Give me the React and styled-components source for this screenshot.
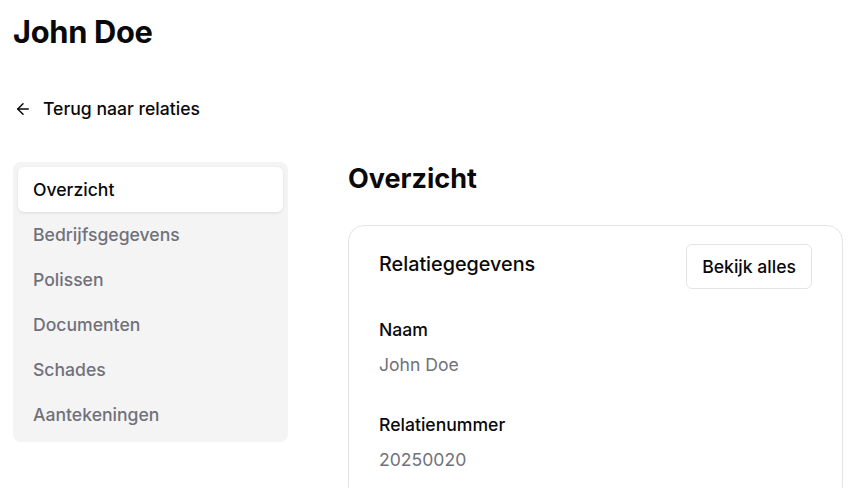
import styled, { createGlobalStyle } from "styled-components";
import { ArrowLeft } from "lucide-react";

const GlobalStyle = createGlobalStyle`
  body {
    margin: 0;
    background: #ffffff;
    font-family: Inter, "Noto Sans", sans-serif;
    color: #09090b;
  }
`;

const Page = styled.div`
  padding: 12px 14px 0 13px;
  display: flex;
  flex-direction: column;
`;

const Title = styled.h1`
  margin: 0;
  font-size: 30.8px;
  font-weight: 700;
  line-height: 40px;
  letter-spacing: -0.3px;
`;

const BackLink = styled.a`
  display: flex;
  align-items: center;
  gap: 11px;
  margin-top: 46px;
  padding-left: 1px;
  font-size: 17.6px;
  font-weight: 500;
  color: #09090b;
  line-height: 22px;
  cursor: pointer;
`;

const Layout = styled.div`
  display: grid;
  grid-template-columns: 275px 1fr;
  gap: 60px;
  margin-top: 42px;
  align-items: start;
`;

const SideNav = styled.nav`
  background: #f4f4f5;
  border-radius: 8px;
  padding: 5px;
  display: flex;
  flex-direction: column;
`;

const NavItem = styled.div`
  height: 45px;
  display: flex;
  align-items: center;
  padding-left: 15px;
  font-size: 17.6px;
  font-weight: 500;
  border-radius: 6px;
  color: ${(p) => (p.$active ? "#09090b" : "#71717a")};
  background: ${(p) => (p.$active ? "#ffffff" : "transparent")};
  box-shadow: ${(p) => (p.$active ? "0 1px 3px rgba(0,0,0,0.1)" : "none")};
`;

const Main = styled.section`
  display: flex;
  flex-direction: column;
`;

const Heading = styled.h2`
  margin: 0;
  font-size: 27px;
  font-weight: 700;
  line-height: 34px;
`;

const Card = styled.div`
  margin-top: 29px;
  border: 1px solid #e4e4e7;
  border-radius: 16px;
  padding: 18px 30px 30px;
  display: flex;
  flex-direction: column;
`;

const CardHeader = styled.div`
  display: flex;
  justify-content: space-between;
  align-items: flex-start;
`;

const CardTitle = styled.h3`
  margin: 0;
  padding-top: 8px;
  font-size: 19.8px;
  font-weight: 500;
  line-height: 24px;
`;

const Button = styled.button`
  height: 45px;
  padding: 0 15px;
  border: 1px solid #e4e4e7;
  border-radius: 6px;
  background: #ffffff;
  font-family: inherit;
  font-size: 17.6px;
  font-weight: 500;
  color: #09090b;
`;

const Field = styled.div`
  display: flex;
  flex-direction: column;
  gap: 13px;
  margin-top: ${(p) => p.$top}px;
`;

const Label = styled.div`
  font-size: 17.6px;
  font-weight: 500;
  line-height: 22px;
`;

const Value = styled.div`
  font-size: 17.6px;
  font-weight: 400;
  color: #71717a;
  line-height: 22px;
`;

const navItems = [
  "Overzicht",
  "Bedrijfsgegevens",
  "Polissen",
  "Documenten",
  "Schades",
  "Aantekeningen",
];

export default function App() {
  return (
    <>
      <GlobalStyle />
      <Page>
        <Title>John Doe</Title>
        <BackLink>
          <ArrowLeft size={18} strokeWidth={2} />
          Terug naar relaties
        </BackLink>
        <Layout>
          <SideNav>
            {navItems.map((item, i) => (
              <NavItem key={item} $active={i === 0}>
                {item}
              </NavItem>
            ))}
          </SideNav>
          <Main>
            <Heading>Overzicht</Heading>
            <Card>
              <CardHeader>
                <CardTitle>Relatiegegevens</CardTitle>
                <Button>Bekijk alles</Button>
              </CardHeader>
              <Field $top={30}>
                <Label>Naam</Label>
                <Value>John Doe</Value>
              </Field>
              <Field $top={38}>
                <Label>Relatienummer</Label>
                <Value>20250020</Value>
              </Field>
            </Card>
          </Main>
        </Layout>
      </Page>
    </>
  );
}
